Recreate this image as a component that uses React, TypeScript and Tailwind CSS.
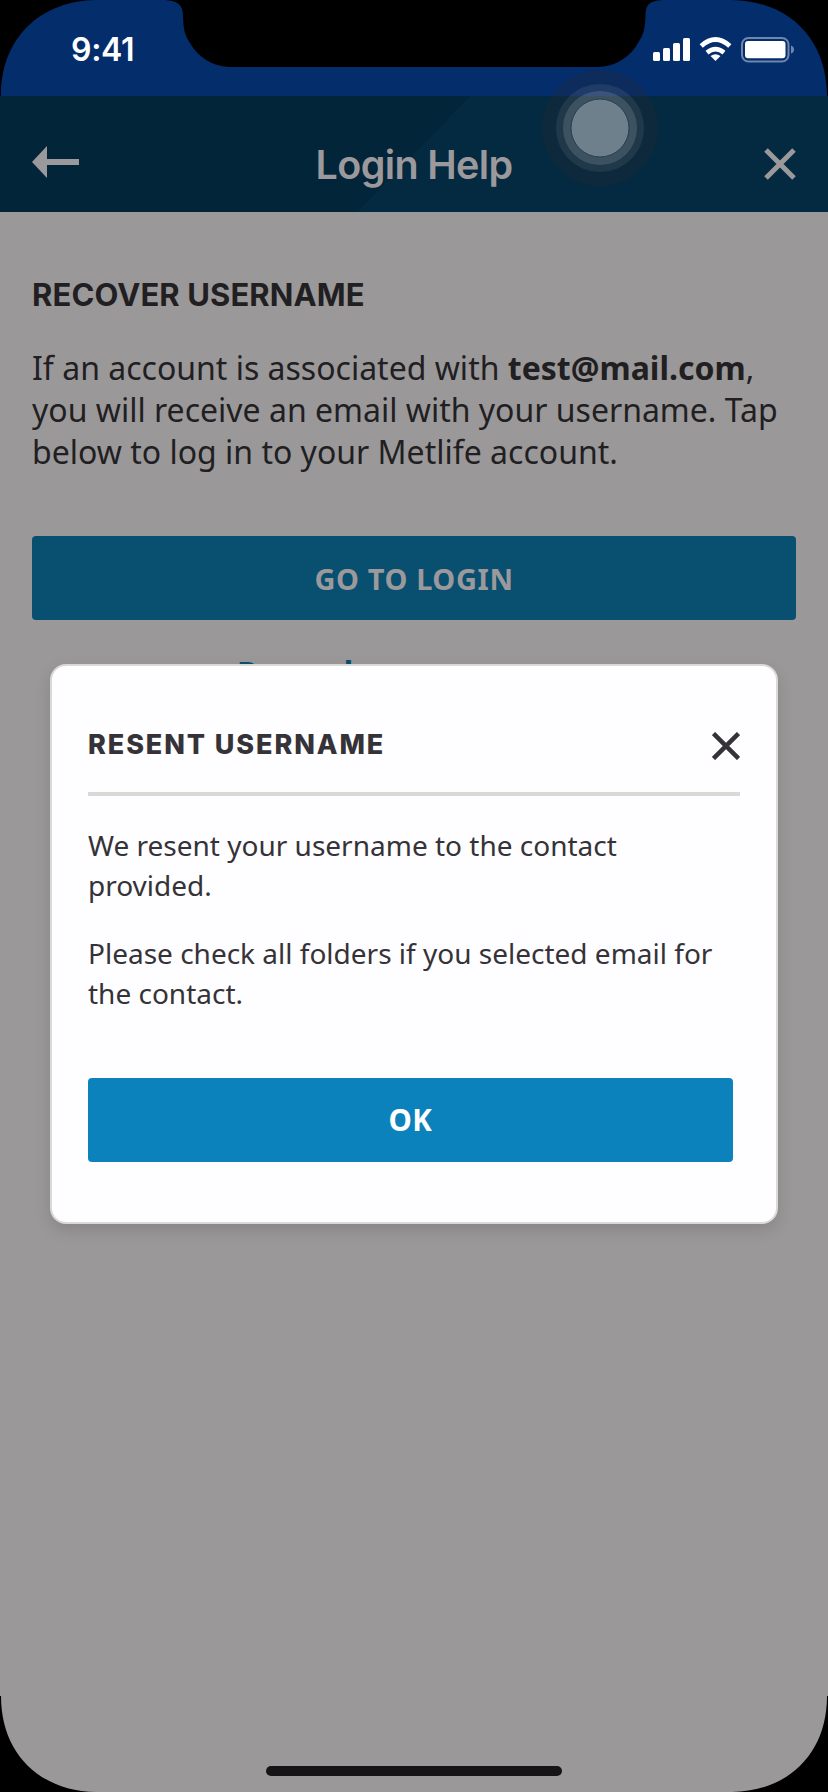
function StatusIcons() {
  return (
    <svg className="h-[26px] w-[142px]" viewBox="653 37 142 26" fill="white">
      <rect x="653" y="52" width="7" height="9" rx="1.5" />
      <rect x="663" y="48" width="7" height="13" rx="1.5" />
      <rect x="673" y="43" width="7" height="18" rx="1.5" />
      <rect x="683" y="38" width="7" height="23" rx="1.5" />
      <path d="M715.5 61 L710.5 56 Q715.5 52.4 720.5 56 Z" />
      <path d="M707 52.600 Q715.5 45.800 724 52.600" fill="none" stroke="white" strokeWidth="4.600" />
      <path d="M701.200 46 Q715.5 33.200 729.800 46" fill="none" stroke="white" strokeWidth="4.800" />
      <rect x="742" y="38" width="46.5" height="23.5" rx="6.5" fill="none" stroke="#6f86ad" strokeWidth="2" />
      <rect x="745" y="41" width="40.5" height="17.3" rx="3" />
      <path d="M791 45.5 Q794 46.5 794 49.5 Q794 52.5 791 53.5 Z" fill="#6f86ad" />
    </svg>
  );
}

function DeviceFrame() {
  return (
    <svg className="pointer-events-none absolute inset-0 h-full w-full" viewBox="0 0 828 1792" fill="black">
      <path d="M0 0 H96 C39 1 1 39 1 96 H0 Z" />
      <path d="M828 0 H732 C789 1 827 39 827 96 H828 Z" />
      <path d="M0 1792 H96 C39 1791 1 1753 1 1696 H0 Z" />
      <path d="M828 1792 H732 C789 1791 827 1753 827 1696 H828 Z" />
      <path d="M165 0 C177 1 183 4 183 16 C183.500 28 184 34 190 43 C197 56 211 66 229 67 H599 C617 66 631 56 638 43 C644 34 645 28 645.500 16 C645.500 4 650 1 663 0 Z" />
    </svg>
  );
}

function AssistiveTouch() {
  return (
    <svg className="absolute left-[541px] top-[69px] h-[118px] w-[118px]" viewBox="-59 -59 118 118">
      <circle r="58" fill="rgba(44,38,45,0.25)" />
      <circle r="44" fill="rgba(255,255,255,0.08)" />
      <circle r="37" fill="rgba(255,255,255,0.13)" />
      <circle r="29" fill="#6f808d" stroke="#263f50" strokeWidth="1" />
    </svg>
  );
}

export default function App() {
  return (
    <div className="relative flex h-[1792px] w-[828px] flex-col overflow-hidden bg-[#9b989a] font-['Noto_Sans',sans-serif] text-[#211f22]">
      <div className="flex h-24 shrink-0 items-start justify-between bg-[#032d6b] pl-[71px] pr-[33px]">
        <span className="mt-[30px] font-['Inter',sans-serif] text-[32px] leading-[40px] font-semibold tracking-[-0.3px] text-white">9:41</span>
        <div className="mt-[37px]">
          <StatusIcons />
        </div>
      </div>

      <header className="flex h-[116px] shrink-0 items-start justify-between bg-[#042a41] bg-[linear-gradient(134.2deg,#03253a_50%,transparent_50%)] px-8 font-['Inter',sans-serif] text-[#9c999c]">
        <svg className="mt-[50px] h-8 w-[47px]" viewBox="0 0 47 32" fill="currentColor">
          <path d="M0 16 L15 0 V13 H47 V19 H15 V32 Z" />
        </svg>
        <h1 className="mt-[45px] mr-[15px] text-[39.500px] leading-[48px] font-semibold tracking-[-0.65px]">Login Help</h1>
        <svg className="mt-[52px] h-8 w-8" viewBox="0 0 32 32" fill="none" stroke="currentColor" strokeWidth="5">
          <path d="M2 2 L30 30 M30 2 L2 30" />
        </svg>
      </header>

      <main className="flex flex-col px-8">
        <h2 className="mt-[63px] font-['Inter',sans-serif] text-[31px] leading-10 font-bold tracking-[0.1px]">RECOVER USERNAME</h2>
        <p className="mt-8 text-[32px] leading-[42px] whitespace-nowrap">
          If an account is associated with <b>test@mail.com</b>,
          <br />
          you will receive an email with your username. Tap
          <br />
          below to log in to your Metlife account.
        </p>
        <button className="mt-[63px] h-[84px] rounded bg-[#084f70] pt-[2px] text-[29px] font-bold tracking-[0.6px] text-[#9c999c]">GO TO LOGIN</button>
        <a className="mt-[33px] pl-[205px] text-[32px] leading-[40px] font-bold text-[#084f70]">Resend username</a>
      </main>

      <div className="absolute left-[50px] top-[664px] flex h-[560px] w-[728px] flex-col rounded-[16px] border-2 border-[#d9d9d6] bg-[#fefdff] pl-9 pr-9 text-[#353337] shadow-[0_6px_16px_rgba(0,0,0,0.13)]">
        <div className="flex h-[130px] shrink-0 items-start justify-between border-b-4 border-[#d9d9d6]">
          <h2 className="mt-[61px] font-['Inter',sans-serif] text-[27px] leading-9 font-extrabold tracking-[1.9px]">RESENT USERNAME</h2>
          <svg className="mt-[66px] h-7 w-7" viewBox="0 0 28 28" fill="none" stroke="currentColor" strokeWidth="4.500">
            <path d="M1.500 1.500 L26.500 26.500 M26.500 1.500 L1.500 26.500" />
          </svg>
        </div>
        <p className="mt-[29px] text-[28px] leading-10 whitespace-nowrap">
          We resent your username to the contact
          <br />
          provided.
        </p>
        <p className="mt-7 text-[28px] leading-10 whitespace-nowrap">
          Please check all folders if you selected email for
          <br />
          the contact.
        </p>
        <button className="mt-[65px] mr-[7px] h-[84px] rounded bg-[#0b82bb] text-[29.500px] font-bold tracking-[0.6px] text-white">OK</button>
      </div>

      <div className="absolute left-[266px] top-[1766px] h-2.5 w-[296px] rounded-full bg-[#161416]" />
      <AssistiveTouch />
      <DeviceFrame />
    </div>
  );
}
